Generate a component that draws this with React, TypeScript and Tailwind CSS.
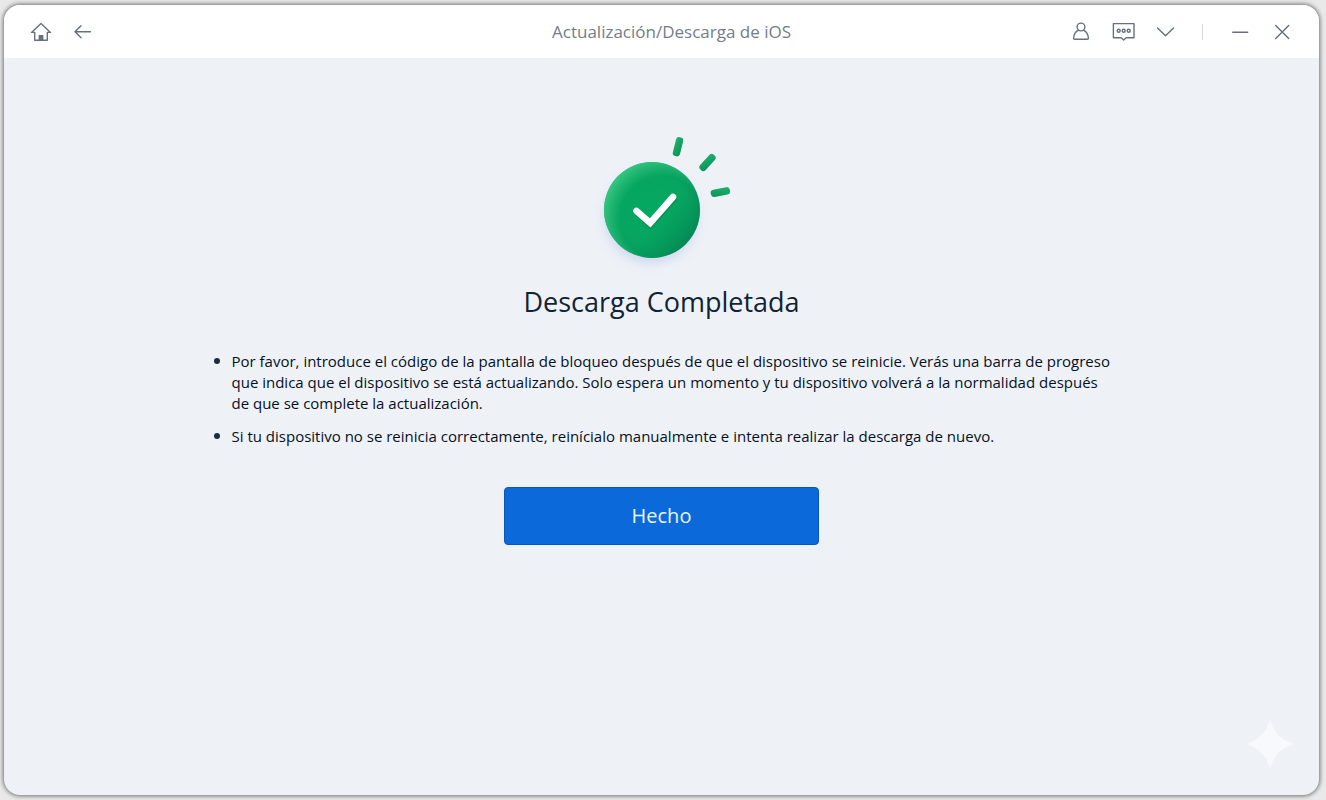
import React from 'react';
import { clsx } from 'clsx';

const instructions = [
  'Por favor, introduce el código de la pantalla de bloqueo después de que el dispositivo se reinicie. Verás una barra de progreso que indica que el dispositivo se está actualizando. Solo espera un momento y tu dispositivo volverá a la normalidad después de que se complete la actualización.',
  'Si tu dispositivo no se reinicia correctamente, reinícialo manualmente e intenta realizar la descarga de nuevo.',
];

interface IconButtonProps {
  label: string;
  className?: string;
  children: React.ReactNode;
}

const IconButton: React.FC<IconButtonProps> = ({ label, className, children }) => (
  <button
    type="button"
    aria-label={label}
    className={clsx('flex h-10 w-10 items-center justify-center rounded hover:bg-slate-100', className)}
  >
    <svg
      width="24"
      height="24"
      viewBox="0 0 24 24"
      fill="none"
      stroke="currentColor"
      strokeWidth="1.4"
      strokeLinecap="round"
      strokeLinejoin="round"
    >
      {children}
    </svg>
  </button>
);

const TitleBar: React.FC = () => (
  <header className="grid grid-cols-[1fr_auto_1fr] items-center bg-white px-[17px] h-[53px] text-[#66707e]">
    <div className="flex items-center gap-0.5">
      <IconButton label="Inicio">
        <path d="M2.500 12.400 12 3.600l9.500 8.800h-3.200v7.800H5.700v-7.800Z" />
        <path d="M10.300 20v-4.400h3.400V20Z" fill="currentColor" />
      </IconButton>
      <IconButton label="Atrás">
        <path d="M19.500 11.700H4M10 5.700l-6 6 6 6" />
      </IconButton>
    </div>

    <h1 className="pl-5 text-[17px] leading-6 text-[#747c8a]">Actualización/Descarga de iOS</h1>

    <div className="flex items-center justify-end gap-0.5">
      <IconButton label="Cuenta">
        <circle cx="12" cy="7" r="3.900" />
        <path d="M9.600 10.200C6.500 11.600 4.900 14.600 4.600 18.200c0 .700.300 1.100 1 1.100h12.800c.700 0 1-.400 1-1.100-.300-3.600-1.900-6.600-5-8" />
      </IconButton>
      <IconButton label="Comentarios">
        <path d="M2.400 3.600H23v14.200h-7.800L12.700 20l-2.500-2.200H2.400Z" />
        <circle cx="7.700" cy="10.700" r="1.500" />
        <circle cx="12.700" cy="10.700" r="1.500" />
        <circle cx="17.700" cy="10.700" r="1.500" />
      </IconButton>
      <IconButton label="Menú">
        <path d="m4.500 8 8 7.800 8-7.800" />
      </IconButton>
      <span className="mx-[15px] h-4 w-px bg-[#d9dce2]" />
      <IconButton label="Minimizar">
        <path d="M4.700 12.300h15" />
      </IconButton>
      <IconButton label="Cerrar">
        <path d="m5.700 5.500 13 13M18.700 5.500l-13 13" />
      </IconButton>
    </div>
  </header>
);

const SuccessBadge: React.FC = () => (
  <svg width="160" height="148" viewBox="0 0 160 148" fill="none" aria-hidden="true">
    <defs>
      <radialGradient id="disc" cx="0.52" cy="0.52" r="0.54">
        <stop offset="0" stopColor="#05a960" />
        <stop offset="0.7" stopColor="#06a560" />
        <stop offset="1" stopColor="#05965a" />
      </radialGradient>
      <radialGradient id="shine" cx="0.6" cy="0.58" r="0.62">
        <stop offset="0.7" stopColor="#3ccf86" stopOpacity="0" />
        <stop offset="1" stopColor="#3ccf86" stopOpacity="0.85" />
      </radialGradient>
      <linearGradient id="shade" x1="0.1" y1="0.15" x2="0.9" y2="0.85">
        <stop offset="0.6" stopColor="#048a56" stopOpacity="0" />
        <stop offset="1" stopColor="#03774c" stopOpacity="0.6" />
      </linearGradient>
      <linearGradient id="ray" x1="0" y1="0" x2="1" y2="1">
        <stop offset="0" stopColor="#22b270" />
        <stop offset="1" stopColor="#079257" />
      </linearGradient>
      <filter id="blur" x="-30%" y="-30%" width="160%" height="160%">
        <feGaussianBlur stdDeviation="6" />
      </filter>
    </defs>
    <circle cx="69" cy="89" r="46" fill="#b9c3ea" opacity="0.6" filter="url(#blur)" />
    <circle cx="70" cy="82" r="48" fill="url(#disc)" />
    <circle cx="70" cy="82" r="48" fill="url(#shine)" />
    <circle cx="70" cy="82" r="48" fill="url(#shade)" />
    <path d="M55 84.500 68.500 97 91.500 71" stroke="#03804c" strokeOpacity="0.4" strokeWidth="7" strokeLinecap="round" />
    <path d="m54.500 83 13.700 12L91 69" stroke="#fff" strokeWidth="6.500" strokeLinecap="round" />
    <g fill="url(#ray)">
      <rect x="92.300" y="9" width="7.400" height="19.500" rx="3.200" transform="rotate(14 96 18.800)" />
      <rect x="121.800" y="24.500" width="7.400" height="20" rx="3.200" transform="rotate(42 125.500 34.500)" />
      <rect x="134.700" y="54.300" width="7.400" height="19.500" rx="3.200" transform="rotate(79 138.400 64)" />
    </g>
  </svg>
);

export default function App() {
  return (
    <div className="flex min-h-screen bg-[#e9e9e9] py-[5px] pr-[7px] pl-1 font-['Open_Sans',sans-serif]">
      <div className="flex flex-1 flex-col overflow-hidden rounded-2xl bg-[#eef2f7] shadow-[0_0_4px_1px_#707070]">
        <TitleBar />

        <main className="relative flex flex-1 flex-col items-center px-6 pt-[70px]">
          <SuccessBadge />
          <h2 className="mt-2 text-[27px] leading-9 text-[#122233]">Descarga Completada</h2>

          <ul className="mt-[31px] w-full max-w-[908px] list-none space-y-3 pl-[6px] text-[15px] leading-[21px] font-medium text-[#06101f]">
            {instructions.map((text) => (
              <li key={text} className="flex items-start">
                <span className="mt-[7px] mr-3 h-[6px] w-[6px] shrink-0 rounded-full bg-[#1a2c42]" />
                <p>{text}</p>
              </li>
            ))}
          </ul>

          <button
            type="button"
            className="mt-10 h-[58px] w-[315px] rounded border border-[#0a55bd] bg-[#0c69da] text-xl text-[#e6f6ff] hover:bg-[#0a5fc8]"
          >
            Hecho
          </button>

          <svg
            className="absolute right-6 bottom-[26px]"
            width="50"
            height="50"
            viewBox="0 0 50 50"
            fill="#f7f9fd"
            aria-hidden="true"
          >
            <path d="M25 1C29 14 36 21 49 25 36 29 29 36 25 49 21 36 14 29 1 25 14 21 21 14 25 1Z" />
          </svg>
        </main>
      </div>
    </div>
  );
}
